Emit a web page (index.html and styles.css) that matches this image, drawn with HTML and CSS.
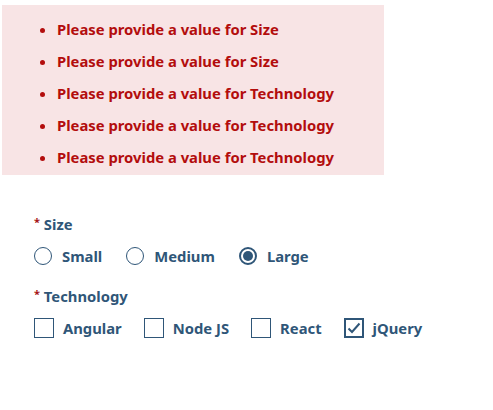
FILE: index.html
```html
<!DOCTYPE html>
<html lang="en">
<head>
    <meta charset="UTF-8">
    <meta name="viewport" content="width=device-width, initial-scale=1.0">
    <title>Validation Summary</title>
    <link rel="stylesheet" href="styles.css">
</head>
<body>

<!-- Validation summary -->
<div class="summary">
    <ul>
        <li>Please provide a value for Size</li>
        <li>Please provide a value for Size</li>
        <li>Please provide a value for Technology</li>
        <li>Please provide a value for Technology</li>
        <li>Please provide a value for Technology</li>
    </ul>
</div>

<form class="form">
    <div class="field">
        <div class="label"><span class="req">*</span> Size</div>
        <div class="options">
            <label class="option"><span class="radio"></span>Small</label>
            <label class="option"><span class="radio"></span>Medium</label>
            <label class="option"><span class="radio checked"></span>Large</label>
        </div>
    </div>

    <div class="field">
        <div class="label"><span class="req">*</span> Technology</div>
        <div class="options checks">
            <label class="option check"><span class="box"></span>Angular</label>
            <label class="option check"><span class="box"></span>Node JS</label>
            <label class="option check"><span class="box"></span>React</label>
            <label class="option check"><span class="box checked">
                <svg width="14" height="12" viewBox="0 0 14 12"><path d="M1.5 6.5 L5 10 L12.5 1.5" fill="none" stroke="#2f5678" stroke-width="2"/></svg>
            </span>jQuery</label>
        </div>
    </div>
</form>

</body>
</html>
```

FILE: styles.css
```css
body {
    font-family: "Noto Sans", sans-serif;
    font-weight: bold;
    font-size: 14.8px;
    margin: 0;
    padding: 5px 0 0 2px;
}
.summary {
    width: 382px;
    background: #f8e4e5;
    color: #b30d0d;
    padding: 8px 0 2px;
}
.summary ul {
    margin: 0;
    padding-left: 55px;
}
.summary li {
    line-height: 32px;
}
.form {
    padding: 33px 0 0 32px;
    color: #2f5678;
}
.field {
    margin-bottom: 6px;
}
.label {
    line-height: 28px;
}
.req {
    color: #a51414;
    font-size: 11px;
    vertical-align: 4px;
}
.options {
    display: flex;
    gap: 24px;
    height: 36px;
    align-items: center;
}
.options.checks {
    gap: 22px;
}
.option {
    display: flex;
    align-items: center;
    gap: 10px;
}
.option.check {
    gap: 9px;
}
.radio {
    width: 18px;
    height: 18px;
    border: 1.5px solid #2f5678;
    border-radius: 50%;
    box-sizing: border-box;
    display: flex;
    align-items: center;
    justify-content: center;
}
.radio.checked {
    border-width: 2px;
}
.radio.checked::after {
    content: "";
    width: 10px;
    height: 10px;
    border-radius: 50%;
    background: #2f5678;
}
.box {
    width: 20px;
    height: 20px;
    border: 1.5px solid #2f5678;
    box-sizing: border-box;
    display: flex;
    align-items: center;
    justify-content: center;
}
.box.checked {
    border-width: 2px;
}
```
